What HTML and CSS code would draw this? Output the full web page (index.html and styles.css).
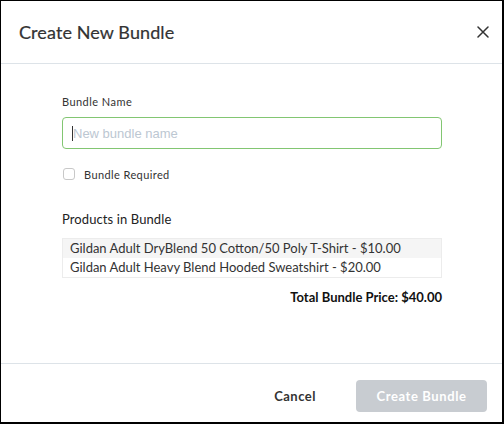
FILE: index.html
```html
<!DOCTYPE html>
<html>
<head>
<meta charset="utf-8">
<link rel="stylesheet" href="styles.css">
</head>
<body>
<div class="modal">
  <header class="modal-header">
    <h1 class="modal-title">Create New Bundle</h1>
    <button class="close-btn" aria-label="Close">
      <svg width="12" height="12" viewBox="0 0 12 12"><path d="M1 1 L11 11 M11 1 L1 11" stroke="#333" stroke-width="1.5" stroke-linecap="round"/></svg>
    </button>
  </header>
  <main class="modal-body">
    <label class="field-label">Bundle Name</label>
    <div class="input"><span class="caret"></span><span class="placeholder">New bundle name</span></div>
    <label class="check-row"><span class="checkbox"></span><span>Bundle Required</span></label>
    <h2 class="section-title">Products in Bundle</h2>
    <ul class="product-list">
      <li class="alt">Gildan Adult DryBlend 50 Cotton/50 Poly T-Shirt - $10.00</li>
      <li>Gildan Adult Heavy Blend Hooded Sweatshirt - $20.00</li>
    </ul>
    <div class="total">Total Bundle Price: $40.00</div>
  </main>
  <footer class="modal-footer">
    <button class="btn-cancel">Cancel</button>
    <button class="btn-create">Create Bundle</button>
  </footer>
</div>
</body>
</html>
```

FILE: styles.css
```css
* { box-sizing: border-box; }
html, body { margin: 0; padding: 0; background: #fff; }
body { font-family: Lato, "Open Sans", sans-serif; color: #333; }
.modal {
  width: 504px;
  height: 424px;
  border-left: 1px solid #000;
  border-top: 1px solid #000;
  border-right: 2px solid #000;
  border-bottom: 2px solid #000;
  display: flex;
  flex-direction: column;
  background: #fff;
}
.modal-header {
  height: 63px;
  border-bottom: 1px solid #dde3e8;
  display: flex;
  align-items: center;
  justify-content: space-between;
  padding: 0 13px 0 18px;
}
.modal-title {
  margin: 0;
  font-size: 18px;
  font-weight: 400;
  color: #333;
  letter-spacing: 0.1px;
  -webkit-text-stroke: 0.2px #333;
}
.close-btn {
  border: 0; background: none; padding: 0; width: 12px; height: 12px;
  display: flex;
}
.modal-body {
  flex: 1;
  padding: 31px 60px 0 61px;
  display: flex;
  flex-direction: column;
}
.field-label { font-size: 11px; line-height: 14px; color: #333; letter-spacing: 0.45px; }
.input {
  margin-top: 8px;
  height: 32px;
  border: 1.5px solid #82c672;
  border-radius: 4px;
  display: flex;
  align-items: center;
  padding-left: 9px;
}
.caret { width: 1px; height: 15px; background: #333; }
.placeholder {
  font-family: "Liberation Sans", Arial, sans-serif;
  font-size: 13px;
  color: #bcc7d2;
}
.check-row {
  margin-top: 18px;
  display: flex;
  align-items: center;
  font-size: 11px;
  color: #333;
  height: 14px;
  letter-spacing: 0.4px;
}
.checkbox {
  width: 12px; height: 12px;
  border: 1px solid #c8c8c8;
  border-radius: 3px;
  margin-left: 1px;
  margin-right: 9px;
}
.section-title {
  margin: 30px 0 0;
  font-size: 13px;
  font-weight: 400;
  line-height: 16px;
  color: #222;
  letter-spacing: 0.1px;
}
.product-list {
  list-style: none;
  margin: 11px 0 0;
  padding: 0;
  border: 1px solid #ececec;
}
.product-list li {
  height: 19px;
  line-height: 19px;
  padding-left: 7px;
  font-size: 13px;
  color: #333;
}
.product-list li.alt { background: #f5f5f5; }
.total {
  margin-top: 11px;
  text-align: right;
  font-weight: 700;
  font-size: 13px;
  color: #111;
}
.modal-footer {
  height: 59px;
  border-top: 1px solid #dde3e8;
  display: flex;
  align-items: center;
  justify-content: flex-end;
  padding: 5px 15px 0 0;
}
.btn-cancel {
  border: 0; background: none;
  font-family: Lato, sans-serif;
  font-weight: 700;
  font-size: 13px;
  color: #333;
  margin-right: 40px;
  padding: 0;
  letter-spacing: 0.5px;
}
.btn-create {
  width: 131px;
  height: 32px;
  border: 0;
  border-radius: 4px;
  background: #c8ccd1;
  color: #fff;
  font-family: Lato, sans-serif;
  font-weight: 700;
  font-size: 13px;
  padding: 0;
  letter-spacing: 0.6px;
}
```
